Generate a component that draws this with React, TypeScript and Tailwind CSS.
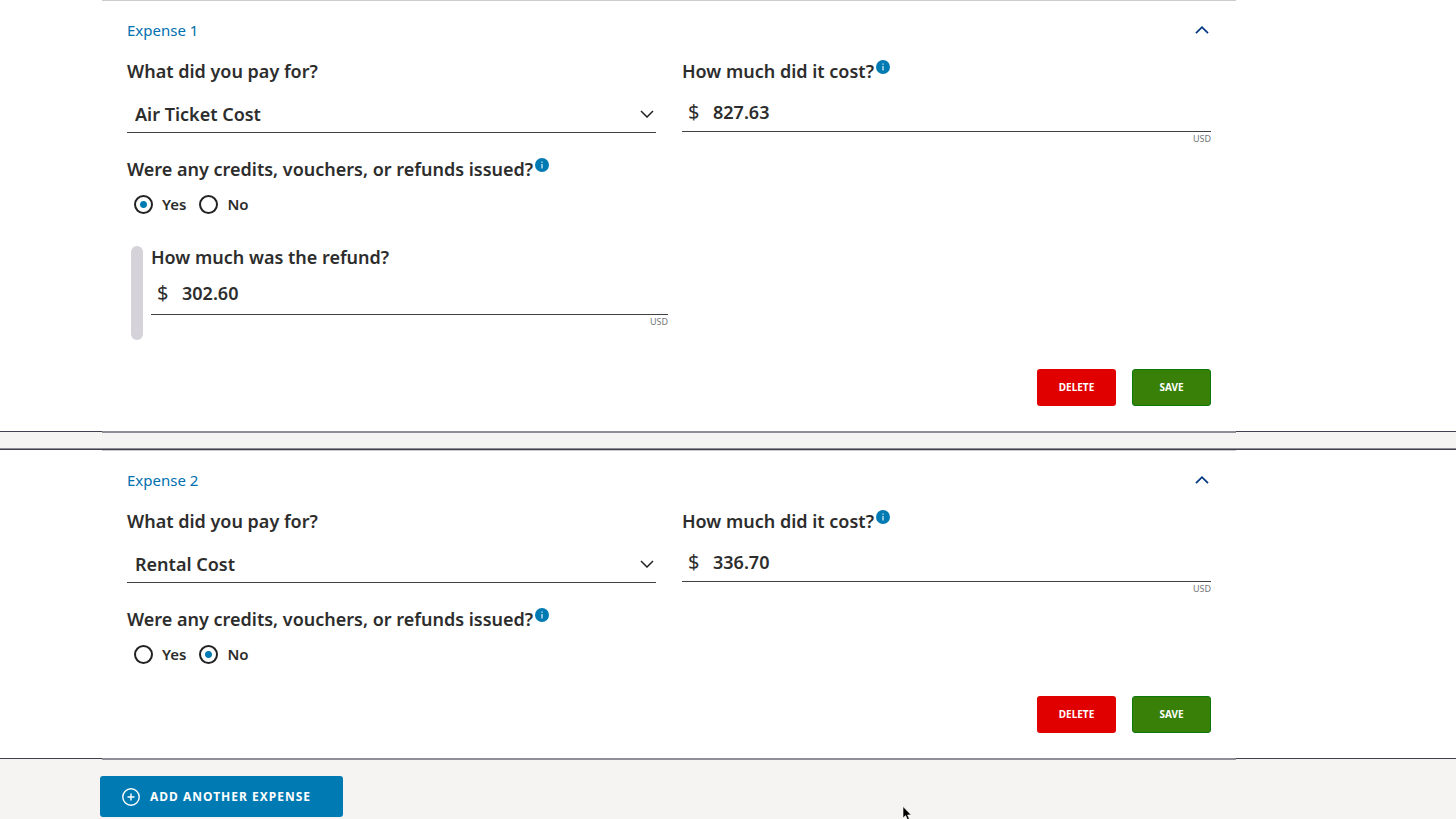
import { FC, useState } from "react"

interface ExpenseProps {
  index: number
  category: string
  cost: string
  refund?: string
}

interface AmountFieldProps {
  id: string
  value: string
  className: string
}

const CATEGORIES = ["Air Ticket Cost", "Rental Cost"]

const InfoButton: FC = () => (
  <button type="button" aria-label="More information" className="mb-2 size-[14px] shrink-0">
    <svg viewBox="0 0 14 14" className="size-[14px]">
      <circle cx="7" cy="7" r="7" fill="#007ab3" />
      <path d="M7 6v4.5M7 3.5v1.2" stroke="#fff" strokeWidth="1.1" />
    </svg>
  </button>
)

const AmountField: FC<AmountFieldProps> = ({ id, value, className }) => (
  <>
    <div className={`flex items-center border-b border-[#414141] pl-[6px] ${className}`}>
      <span className="w-[25px] text-xl">$</span>
      <input id={id} type="text" defaultValue={value} className="h-full min-w-0 flex-1 font-semibold outline-none" />
    </div>
    <p className="text-right text-[9px] leading-[13px] text-[#767676]">USD</p>
  </>
)

const Expense: FC<ExpenseProps> = ({ index, category, cost, refund }) => {
  const [refunded, setRefunded] = useState(refund !== undefined)
  const radio = "size-[19px] appearance-none rounded-full border-2 border-[#222222] checked:bg-[radial-gradient(circle,#007ab3_3px,#ffffff_4px)]"

  return (
    <div className="-mb-[2px] border-t border-b-2 border-t-[#cccccc] border-b-[#8f8d97] px-[25px] pb-[25px]">
      <div className="flex h-[58px] items-center justify-between pr-[2px]">
        <h2 className="text-[15px] text-[#0070ae]">Expense {index}</h2>
        <button type="button" aria-label={`Collapse expense ${index}`}>
          <svg viewBox="0 0 14 8" className="h-2 w-[14px]" fill="none" stroke="#003781" strokeWidth="1.7">
            <path d="M1 7.2L7 1.2L13 7.2" />
          </svg>
        </button>
      </div>

      <div className="grid grid-cols-2 gap-[26px]">
        <div>
          <label htmlFor={`category-${index}`} className="block h-6 font-semibold">What did you pay for?</label>
          <div className="mt-3 grid h-[38px] items-center border-b border-[#414141]">
            <select
              id={`category-${index}`}
              defaultValue={category}
              className="col-start-1 row-start-1 h-full appearance-none pl-2 font-semibold outline-none"
            >
              {CATEGORIES.map((name) => <option key={name}>{name}</option>)}
            </select>
            <svg viewBox="0 0 14 8" className="pointer-events-none col-start-1 row-start-1 mr-[2px] h-2 w-[14px] justify-self-end" fill="none" stroke="#222222" strokeWidth="1.5">
              <path d="M1 1L7 7L13 1" />
            </svg>
          </div>
        </div>
        <div>
          <div className="flex h-6 items-center gap-[2px]">
            <label htmlFor={`cost-${index}`} className="font-semibold">How much did it cost?</label>
            <InfoButton />
          </div>
          <AmountField id={`cost-${index}`} value={cost} className="mt-[10px] h-[39px]" />
        </div>
      </div>

      <fieldset className="mt-3 pb-px">
        <legend className="flex h-6 items-center gap-[2px] font-semibold">
          Were any credits, vouchers, or refunds issued?
          <InfoButton />
        </legend>
        <div className="mt-[11px] flex h-6 items-center gap-[13px] pl-[7px] text-[15px] font-semibold">
          <label className="flex items-center gap-[9px]">
            <input type="radio" name={`refunded-${index}`} checked={refunded} onChange={() => setRefunded(true)} className={radio} />
            Yes
          </label>
          <label className="flex items-center gap-[9px]">
            <input type="radio" name={`refunded-${index}`} checked={!refunded} onChange={() => setRefunded(false)} className={radio} />
            No
          </label>
        </div>
      </fieldset>

      {refunded && (
        <div className="mt-[29px] ml-1 flex h-[94px] w-[calc(50%-5px)] gap-2">
          <div className="w-3 rounded-full bg-[#d5d2da]" />
          <div className="flex-1">
            <label htmlFor={`refund-${index}`} className="block h-6 leading-[23px] font-semibold">How much was the refund?</label>
            <AmountField id={`refund-${index}`} value={refund ?? ""} className="h-[45px] pt-px" />
          </div>
        </div>
      )}

      <div className="mt-[29px] flex justify-end gap-4 text-[10px] font-bold text-white">
        <button type="button" className="h-[37px] w-[79px] rounded-[3px] bg-[#e10000] pb-[2px]">DELETE</button>
        <button type="button" className="h-[37px] w-[79px] rounded-[3px] border border-[#0b7a0b] bg-[#388008] pb-[2px]">SAVE</button>
      </div>
    </div>
  )
}

export default function App() {
  return (
    <main className="relative min-h-screen overflow-hidden bg-[#f5f4f3] font-['Noto_Sans',sans-serif] text-lg leading-6 text-[#2d2d2d]">
      <section className="border-b border-[#414050] bg-white pr-[220px] pl-[102px]">
        <Expense index={1} category="Air Ticket Cost" cost="827.63" refund="302.60" />
      </section>
      <div className="h-[17px] border-b border-[#8f8d97]" />
      <section className="border-y border-[#414050] bg-white pr-[220px] pl-[102px]">
        <Expense index={2} category="Rental Cost" cost="336.70" />
      </section>
      <div className="pt-[17px] pl-[100px]">
        <button type="button" className="flex h-[41px] w-[243px] items-center gap-[10px] rounded-[3px] bg-[#007ab3] pl-[22px] text-xs font-bold tracking-[1px] text-white">
          <svg viewBox="0 0 18 18" className="size-[18px]" fill="none" stroke="#fff" strokeWidth="1.4">
            <circle cx="9" cy="9" r="8.2" />
            <path d="M9 5.5v7M5.5 9h7" />
          </svg>
          ADD ANOTHER EXPENSE
        </button>
      </div>
      <svg viewBox="0 0 10 15" className="pointer-events-none absolute top-[806px] left-[902px] h-[15px] w-[10px]">
        <path d="M1 0.5V12L3.6 9.6L5.4 13.8L7.4 13L5.6 8.9H9.2Z" fill="#000" stroke="#fff" strokeWidth="0.6" />
      </svg>
    </main>
  )
}
